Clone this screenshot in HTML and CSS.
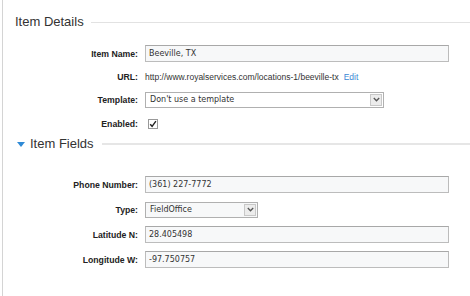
FILE: index.html
```html
<!DOCTYPE html>
<html lang="en">
<head>
  <meta charset="UTF-8">
  <title>Item Details</title>
  <link rel="stylesheet" href="styles.css">
</head>
<body>
<div class="page">
  <!-- Item details -->
  <div class="section-title">
    <span class="title-text">Item Details</span>
    <span class="title-line"></span>
  </div>
  <div class="form">
    <label class="label">Item Name:</label>
    <div class="field"><input class="text-input wide" type="text" value="Beeville, TX"></div>

    <label class="label">URL:</label>
    <div class="field url">http://www.royalservices.com/locations-1/beeville-tx <a class="edit" href="#">Edit</a></div>

    <label class="label">Template:</label>
    <div class="field">
      <div class="select template">
        <span class="select-value">Don't use a template</span>
        <span class="select-btn"><svg width="7" height="5" viewBox="0 0 7 5"><path d="M0.8 1 L3.5 3.8 L6.2 1" fill="none" stroke="#555" stroke-width="1.3"/></svg></span>
      </div>
    </div>

    <label class="label enabled-label">Enabled:</label>
    <div class="field enabled-field">
      <span class="checkbox"><svg width="8" height="8" viewBox="0 0 8 8"><path d="M1.2 4.2 L3.1 6.3 L6.9 1.2" fill="none" stroke="#222" stroke-width="1.4"/></svg></span>
    </div>
  </div>

  <!-- Item fields -->
  <div class="section-title fields-title">
    <span class="triangle"></span>
    <span class="title-text">Item Fields</span>
    <span class="title-line thick"></span>
  </div>
  <div class="form fields-form">
    <label class="label">Phone Number:</label>
    <div class="field"><input class="text-input wide" type="text" value="(361) 227-7772"></div>

    <label class="label">Type:</label>
    <div class="field">
      <div class="select type">
        <span class="select-value">FieldOffice</span>
        <span class="select-btn"><svg width="7" height="5" viewBox="0 0 7 5"><path d="M0.8 1 L3.5 3.8 L6.2 1" fill="none" stroke="#555" stroke-width="1.3"/></svg></span>
      </div>
    </div>

    <label class="label">Latitude N:</label>
    <div class="field"><input class="text-input wide" type="text" value="28.405498"></div>

    <label class="label">Longitude W:</label>
    <div class="field"><input class="text-input wide" type="text" value="-97.750757"></div>
  </div>
</div>
</body>
</html>
```

FILE: styles.css
```css
/* Pagina */
body {
  margin: 0;
  background: #fff;
  font-family: "Liberation Sans", Arial, sans-serif;
  color: #333;
}
.page {
  margin-left: 2px;
  border-left: 1px solid #d4d4d4;
  min-height: 296px;
  padding-top: 14px;
  box-sizing: border-box;
}
/* Titoli di sezione */
.section-title {
  display: flex;
  align-items: center;
  height: 16px;
  padding-left: 12px;
}
.title-text {
  font-size: 13px;
  line-height: 16px;
  color: #333;
}
.title-line {
  flex: 1;
  height: 1px;
  margin-left: 7px;
  background: #e2e2e2;
}
.title-line.thick {
  height: 2px;
  margin-left: 8px;
  background: #e6e6e6;
}
.fields-title {
  margin-top: 5px;
  padding-left: 14px;
}
.triangle {
  width: 0;
  height: 0;
  border-left: 4px solid transparent;
  border-right: 4px solid transparent;
  border-top: 5px solid #2f8ad6;
  margin-right: 5px;
}
/* Griglia del form */
.form {
  display: grid;
  grid-template-columns: 135px 1fr;
  column-gap: 7px;
  row-gap: 6px;
  grid-auto-rows: 17px;
  margin-top: 15px;
}
.fields-form {
  margin-top: 24px;
  row-gap: 8px;
}
.label {
  display: flex;
  align-items: center;
  justify-content: flex-end;
  font-weight: bold;
  font-size: 8.7px;
  color: #222;
}
.field {
  display: flex;
  align-items: center;
}
.enabled-label,
.enabled-field {
  margin-top: 2px;
}
.url {
  font-size: 8.5px;
  color: #333;
}
.edit {
  margin-left: 5px;
  color: #3b87d4;
  text-decoration: none;
}
/* Campi di testo */
.text-input {
  box-sizing: border-box;
  height: 17px;
  margin: 0;
  padding: 0 3px;
  border: 1px solid #bcbcbc;
  border-top-color: #a8a8a8;
  background: #f7f8f9;
  font-family: "DejaVu Sans", sans-serif;
  font-size: 8px;
  color: #333;
  outline: none;
}
.text-input.wide {
  width: 304px;
}
/* Select */
.select {
  box-sizing: border-box;
  display: flex;
  align-items: center;
  height: 16px;
  border: 1px solid #b0b0b0;
  background: #fff;
  font-family: "DejaVu Sans", sans-serif;
  font-size: 8px;
  color: #333;
}
.select.template {
  width: 239px;
}
.select.type {
  width: 113px;
  background: #f7f8f9;
}
.select-value {
  flex: 1;
  padding-left: 4px;
}
.select-btn {
  display: flex;
  align-items: center;
  justify-content: center;
  width: 12px;
  height: 12px;
  margin-right: 1px;
  border: 1px solid #c8c8c8;
  background: #ececec;
  box-sizing: border-box;
}
/* Checkbox */
.checkbox {
  box-sizing: border-box;
  display: flex;
  align-items: center;
  justify-content: center;
  width: 10px;
  height: 10px;
  margin-left: 3px;
  border: 1px solid #999;
  background: #fff;
}
```
